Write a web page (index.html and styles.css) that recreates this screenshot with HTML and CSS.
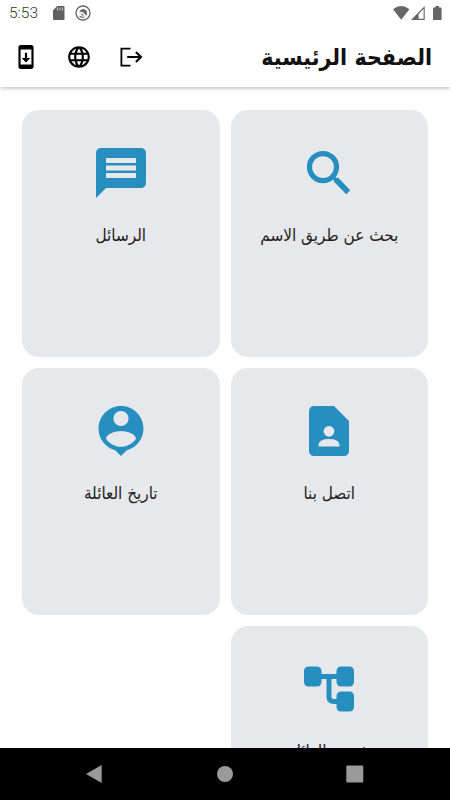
FILE: index.html
```html
<!DOCTYPE html>
<html lang="ar" dir="rtl">
<head>
    <meta charset="UTF-8">
    <meta name="viewport" content="width=device-width, initial-scale=1.0">
    <title>الصفحة الرئيسية</title>
    <link rel="stylesheet" href="styles.css">
</head>
<body>
<div class="screen">
    <!-- Status bar -->
    <div class="status-bar" dir="ltr">
        <span class="time">5:53</span>
        <svg width="12" height="14" viewBox="0 0 12 14"><path fill="#5f5f5f" d="M4.2 0H10.500q1 0 1 1v12q0 1-1 1h-9.500q-1 0-1-1V4.200z"/><path stroke="#ccc" stroke-width="1" d="M4.500 1.500v3M6.900 1.500v3M9.300 1.500v3"/></svg>
        <svg class="app-icon" width="16" height="16" viewBox="0 0 16 16"><circle cx="8" cy="8" r="7" fill="none" stroke="#666" stroke-width="1.300"/><path fill="none" stroke="#666" stroke-width="1.300" d="M4.600 10.800A4.300 4.300 0 0 0 9.500 12"/><path fill="#666" d="M4.500 7.300Q5 4.200 8.300 4Q12 4.500 12 8.200Q12 9.700 11.400 10.800L8.600 7.900Q6.500 6 4.500 7.300zM5.500 8.300Q7.500 8 9.300 10.800Q7 11.200 5.500 8.300z"/></svg>
        <span class="spacer"></span>
        <svg width="17" height="14" viewBox="0 0 17 14"><path fill="#666" d="M0 3.200Q8.200-3 16.400 3.200L8.200 13.700z"/></svg>
        <svg class="signal-icon" width="14" height="14" viewBox="0 0 14 14"><path fill="#666" d="M13.700 0v14H0z"/><path fill="#fff" d="M12.600 2.800v10H7.600V8z"/></svg>
        <svg class="battery-icon" width="9" height="14" viewBox="0 0 9 14"><path fill="#666" d="M2.600 0h3.400v1.400h2q.6 0 .6.600v11.400q0 .6-.6.600H.6q-.6 0-.6-.6V2q0-.6.6-.6h2z"/></svg>
    </div>

    <!-- App header -->
    <header class="header">
        <h1 class="title">الصفحة الرئيسية</h1>
        <div class="actions" dir="ltr">
            <svg width="26" height="26" viewBox="0 0 24 24"><path d="M17 1.010 7 1c-1.100 0-2 .9-2 2v18c0 1.100.9 2 2 2h10c1.100 0 2-.9 2-2V3c0-1.100-.9-1.990-2-1.990zM17 19H7V5h10v14zm-1-6h-3V8h-2v5H8l4 4 4-4z"/></svg>
            <svg width="26" height="26" viewBox="0 0 24 24"><path d="M11.990 2C6.470 2 2 6.480 2 12s4.470 10 9.990 10C17.520 22 22 17.520 22 12S17.520 2 11.990 2zm6.930 6h-2.950c-.32-1.250-.78-2.450-1.380-3.560 1.840.63 3.370 1.910 4.330 3.560zM12 4.040c.83 1.200 1.480 2.530 1.910 3.960h-3.820c.43-1.430 1.080-2.760 1.910-3.960zM4.260 14C4.100 13.360 4 12.690 4 12s.1-1.360.26-2h3.380c-.08.66-.14 1.320-.14 2s.06 1.340.14 2H4.260zm.82 2h2.950c.32 1.250.78 2.450 1.380 3.560-1.840-.63-3.370-1.900-4.330-3.560zm2.950-8H5.080c.96-1.660 2.490-2.930 4.330-3.560C8.810 5.550 8.350 6.750 8.030 8zM12 19.960c-.83-1.200-1.480-2.530-1.910-3.960h3.820c-.43 1.430-1.080 2.760-1.910 3.960zM14.340 14H9.660c-.09-.66-.16-1.320-.16-2s.07-1.350.16-2h4.680c.09.65.16 1.320.16 2s-.07 1.340-.16 2zm.25 5.560c.6-1.110 1.060-2.310 1.380-3.560h2.950c-.96 1.650-2.490 2.930-4.330 3.560zM16.360 14c.08-.66.14-1.320.14-2s-.06-1.340-.14-2h3.380c.16.64.26 1.310.26 2s-.1 1.360-.26 2h-3.380z"/></svg>
            <svg width="26" height="26" viewBox="0 0 26 26"><path fill="none" stroke="#000" stroke-width="1.800" d="M12.500 4.600H3.400V21.700H12.500"/><path fill="none" stroke="#000" stroke-width="2.100" d="M9.200 13H22.500M17.900 7.900L23 13L17.900 18.100"/></svg>
        </div>
    </header>

    <!-- Menu cards -->
    <main class="grid">
        <div class="card">
            <svg class="card-icon" viewBox="0 0 24 24"><circle class="lens" cx="9.600" cy="9.600" r="5.400"/><path d="M13.900 15.300L15.500 13.700L20.500 18.900L18.900 20.500L13.900 15.400z"/><path class="joint" d="M13.200 13.200L15 15"/></svg>
            <span class="label">بحث عن طريق الاسم</span>
        </div>
        <div class="card">
            <svg class="card-icon" viewBox="0 0 24 24"><path d="M20 2H4c-1.100 0-1.990.9-1.990 2L2 22l4-4h14c1.100 0 2-.9 2-2V4c0-1.100-.9-2-2-2zm-2 12H6v-2h12v2zm0-3H6V9h12v2zm0-3H6V6h12v2z"/></svg>
            <span class="label">الرسائل</span>
        </div>
        <div class="card">
            <svg class="card-icon" viewBox="0 0 24 24"><path d="M14 2H6c-1.100 0-2 .9-2 2v16c0 1.100.9 2 2 2h12c1.100 0 2-.9 2-2V8l-6-6z"/><circle class="cutout" cx="12" cy="12.100" r="2.150"/><path class="cutout" d="M7.800 18.200V17.500Q8 15.200 12 15.200T16.200 17.500V18.200z"/></svg>
            <span class="label">اتصل بنا</span>
        </div>
        <div class="card">
            <svg class="card-icon" viewBox="0 0 24 24"><path d="M12 2c-4.970 0-9 4.030-9 9 0 4.170 2.840 7.670 6.690 8.690L12 22l2.310-2.310C18.160 18.670 21 15.170 21 11c0-4.970-4.030-9-9-9zm0 2c1.660 0 3 1.340 3 3s-1.340 3-3 3-3-1.340-3-3 1.340-3 3-3zm0 14.300c-2.500 0-4.710-1.280-6-3.220.03-1.990 4-3.080 6-3.080 1.990 0 5.970 1.090 6 3.080-1.290 1.940-3.500 3.220-6 3.220z"/></svg>
            <span class="label">تاريخ العائلة</span>
        </div>
        <div class="card">
            <svg class="card-icon" viewBox="0 0 24 24"><rect x="2" y="3" width="7" height="8" rx="1.800"/><rect x="15" y="3" width="7" height="8" rx="1.800"/><rect x="15" y="13" width="7" height="8" rx="1.800"/><path class="branch" d="M8.500 7H15.500M12 7V15Q12 17 14 17H15.500"/></svg>
            <span class="label">شجرة العائلة</span>
        </div>
    </main>

    <!-- Android navigation -->
    <nav class="nav-bar" dir="ltr">
        <svg width="18" height="18" viewBox="0 0 18 18"><path d="M0 9L15.700 0v18z"/></svg>
        <svg width="18" height="18" viewBox="0 0 18 18"><circle cx="9" cy="9" r="8"/></svg>
        <svg width="18" height="18" viewBox="0 0 18 18"><rect x=".3" y=".5" width="17" height="17" rx="1"/></svg>
    </nav>
</div>
</body>
</html>
```
FILE: styles.css
```css
* {
    box-sizing: border-box;
}

body {
    margin: 0;
    background: #fff;
    font-family: "DejaVu Sans Condensed", "DejaVu Sans", sans-serif;
    font-stretch: condensed;
}

svg {
    display: block;
    flex: none;
}

.screen {
    width: 450px;
    height: 800px;
    display: flex;
    flex-direction: column;
    overflow: hidden;
}

/* Status bar */
.status-bar {
    flex: none;
    height: 26.500px;
    padding: 0 8px 0 9px;
    display: flex;
    align-items: center;
}

.time {
    width: 44px;
    font-family: Roboto, sans-serif;
    font-stretch: normal;
    font-size: 15.500px;
    font-weight: 300;
    color: #333;
}

.app-icon {
    margin-left: 10px;
}

.spacer {
    flex: 1;
}

.signal-icon {
    margin-left: 1px;
}

.battery-icon {
    margin-left: 8px;
}

/* Header */
.header {
    flex: none;
    height: 60.500px;
    padding: 0 18px 0 13px;
    display: flex;
    align-items: center;
    justify-content: space-between;
    box-shadow: 0 2px 3px rgba(0, 0, 0, 0.2);
    clip-path: inset(0 0 -8px 0);
}

.title {
    margin: 0;
    font-size: 23px;
    line-height: 30px;
    font-weight: bold;
    color: #111;
    white-space: nowrap;
}

.actions {
    display: flex;
    gap: 26.500px;
}

/* Cards */
.grid {
    flex: 1;
    min-height: 0;
    overflow: hidden;
    padding: 22.500px 22px 0;
    display: grid;
    grid-template-columns: 197.500px 197.500px;
    grid-auto-rows: 247px;
    gap: 11px;
}

.card {
    padding-top: 33px;
    display: flex;
    flex-direction: column;
    align-items: center;
    border-radius: 17px;
    background: #e6e8ec;
}

.card-icon {
    width: 60px;
    height: 60px;
    fill: #278fbf;
}

.lens {
    fill: none;
    stroke: #278fbf;
    stroke-width: 2.100;
}

.joint {
    stroke: #278fbf;
    stroke-width: 1.300;
}

.cutout {
    fill: #e6e8ec;
}

.branch {
    fill: none;
    stroke: #278fbf;
    stroke-width: 2;
}

.label {
    margin-top: 19.500px;
    font-size: 17px;
    line-height: 26px;
    color: #222;
    white-space: nowrap;
}

/* Navigation bar */
.nav-bar {
    flex: none;
    height: 52.500px;
    padding-right: 1px;
    display: flex;
    align-items: center;
    justify-content: center;
    gap: 112px;
    background: #000;
}

.nav-bar svg {
    fill: #9a9a9a;
}
```
